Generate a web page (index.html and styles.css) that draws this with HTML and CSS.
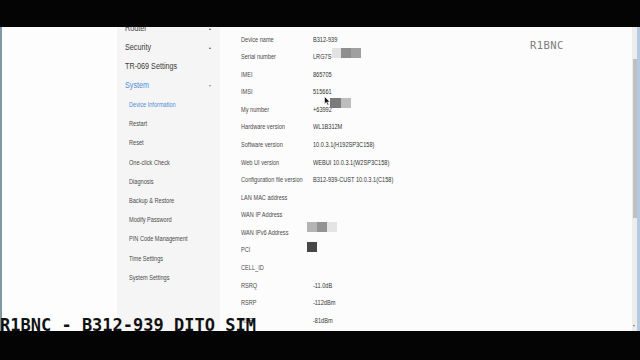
FILE: index.html
```html
<!DOCTYPE html>
<html lang="en">
<head>
<meta charset="utf-8">
<title>Device Information</title>
<link rel="stylesheet" href="styles.css">
</head>
<body>
<div class="screen">
  <div class="frame">
    <div class="blank"></div>
    <nav class="sidebar">
      <ul class="menu">
        <li class="item"><span class="txt">Router</span><i class="caret up"></i></li>
        <li class="item"><span class="txt">Security</span><i class="caret up"></i></li>
        <li class="item"><span class="txt">TR-069 Settings</span></li>
        <li class="item active"><span class="txt">System</span><i class="caret down"></i></li>
        <li class="sub active"><span class="txt">Device Information</span></li>
        <li class="sub"><span class="txt">Restart</span></li>
        <li class="sub"><span class="txt">Reset</span></li>
        <li class="sub"><span class="txt">One-click Check</span></li>
        <li class="sub"><span class="txt">Diagnosis</span></li>
        <li class="sub"><span class="txt">Backup &amp; Restore</span></li>
        <li class="sub"><span class="txt">Modify Password</span></li>
        <li class="sub"><span class="txt">PIN Code Management</span></li>
        <li class="sub"><span class="txt">Time Settings</span></li>
        <li class="sub"><span class="txt">System Settings</span></li>
      </ul>
    </nav>
    <main class="content">
      <div class="row"><span class="label">Device name</span><span class="value">B312-939</span></div>
      <div class="row"><span class="label">Serial number</span><span class="value">LRG7S</span></div>
      <div class="row"><span class="label">IMEI</span><span class="value">865705</span></div>
      <div class="row"><span class="label">IMSI</span><span class="value">515661</span></div>
      <div class="row"><span class="label">My number</span><span class="value">+63992</span></div>
      <div class="row"><span class="label">Hardware version</span><span class="value">WL1B312M</span></div>
      <div class="row"><span class="label">Software version</span><span class="value">10.0.3.1(H192SP3C158)</span></div>
      <div class="row"><span class="label">Web UI version</span><span class="value">WEBUI 10.0.3.1(W2SP3C158)</span></div>
      <div class="row"><span class="label">Configuration file version</span><span class="value">B312-939-CUST 10.0.3.1(C158)</span></div>
      <div class="row"><span class="label">LAN MAC address</span><span class="value"></span></div>
      <div class="row"><span class="label">WAN IP Address</span><span class="value"></span></div>
      <div class="row"><span class="label">WAN IPv6 Address</span><span class="value"></span></div>
      <div class="row"><span class="label">PCI</span><span class="value"></span></div>
      <div class="row"><span class="label">CELL_ID</span><span class="value"></span></div>
      <div class="row"><span class="label">RSRQ</span><span class="value">-11.0dB</span></div>
      <div class="row"><span class="label">RSRP</span><span class="value">-112dBm</span></div>
      <div class="row"><span class="label">RSSI</span><span class="value">-81dBm</span></div>
    </main>
    <div class="scrollbar"><div class="thumb"></div><i class="sb-arrow"></i></div>
  </div>

  <!-- censor pixel blocks over values -->
  <div class="px" style="left:332px;top:48px;width:9px;background:#e2e2e2"></div>
  <div class="px" style="left:341px;top:48px;width:10px;background:#8e8e8e"></div>
  <div class="px" style="left:351px;top:48px;width:10px;background:#a0a0a0"></div>
  <div class="px" style="left:330px;top:98px;width:11px;background:#7b7b7b"></div>
  <div class="px" style="left:341px;top:98px;width:10px;background:#bdbdbd"></div>
  <div class="px" style="left:307px;top:222px;width:10px;background:#b4b4b4"></div>
  <div class="px" style="left:317px;top:222px;width:10px;background:#939393"></div>
  <div class="px" style="left:327px;top:222px;width:10px;background:#e4e4e4"></div>
  <div class="px" style="left:307px;top:242px;width:10px;background:#474747"></div>

  <svg class="cursor" width="7" height="10" viewBox="0 0 7 10"><path d="M0.5 0.5 L0.5 8 L2.3 6.3 L3.6 9.3 L4.8 8.8 L3.6 5.9 L6 5.9 Z" fill="#111" stroke="#fff" stroke-width="0.6"/></svg>

  <div class="wm-top">R1BNC</div>
  <div class="wm-bottom">R1BNC - B312-939 DITO SIM</div>
</div>
</body>
</html>
```
FILE: styles.css
```css
html, body {
  margin: 0;
  padding: 0;
}
body {
  background: #040404;
  width: 640px;
  height: 360px;
  overflow: hidden;
  font-family: "Liberation Sans", Arial, sans-serif;
}
.screen {
  position: relative;
  width: 640px;
  height: 360px;
  box-sizing: border-box;
  padding-top: 27px;
}
.frame {
  height: 304px;
  width: 640px;
  box-sizing: border-box;
  display: flex;
  background: #fcfcfc;
  border-left: 2px solid #8197a8;
  border-right: 3px solid #b4cade;
  overflow: hidden;
}
.blank {
  width: 115px;
  flex: none;
  background: #fdfdfd;
}
.sidebar {
  width: 103px;
  flex: none;
  background: #f5f5f5;
}
.menu {
  list-style: none;
  margin: -9px 0 0;
  padding: 0;
}
.txt {
  display: inline-block;
  transform: scaleX(0.85);
  transform-origin: left center;
  white-space: nowrap;
}
.item {
  height: 19.25px;
  display: flex;
  align-items: center;
  justify-content: space-between;
  padding: 0 9px 0 8px;
  font-size: 8.5px;
  color: #3a3a3a;
}
.item.active {
  color: #4a8fd6;
}
.sub {
  height: 19.2px;
  display: flex;
  align-items: center;
  padding-left: 12px;
  font-size: 6.6px;
  color: #4a4a4a;
}
.sub.active {
  color: #4a8fd6;
}
.caret {
  width: 0;
  height: 0;
  border-left: 1.8px solid transparent;
  border-right: 1.8px solid transparent;
  margin-top: 2px;
}
.caret.up {
  border-bottom: 2.4px solid #555;
}
.caret.down {
  border-top: 2.4px solid #7a8ea3;
}
.content {
  flex: 1;
  padding: 3.4px 0 0 21px;
}
.row {
  height: 17.57px;
  display: flex;
  align-items: center;
}
.label, .value {
  display: inline-block;
  transform: scaleX(0.85);
  transform-origin: left center;
  white-space: nowrap;
  font-size: 6.6px;
}
.label {
  width: 72px;
  color: #4a4a4a;
}
.value {
  color: #333;
}
.scrollbar {
  width: 5px;
  flex: none;
  background: #ededed;
  position: relative;
}
.thumb {
  margin: 32px 0 0 1px;
  height: 159px;
  background: #c0c0c0;
}
.sb-arrow {
  position: absolute;
  left: 1px;
  bottom: 4px;
  width: 0;
  height: 0;
  border-left: 1.5px solid transparent;
  border-right: 1.5px solid transparent;
  border-top: 2px solid #777;
}
.px {
  position: absolute;
  height: 10px;
}
.cursor {
  position: absolute;
  left: 324px;
  top: 96px;
}
.wm-top {
  position: absolute;
  left: 530px;
  top: 40px;
  font-family: "DejaVu Sans Mono", monospace;
  font-size: 10.5px;
  line-height: 1;
  letter-spacing: 0.4px;
  color: #7c7c7c;
}
.wm-bottom {
  position: absolute;
  left: 0;
  top: 317px;
  font-family: "DejaVu Sans Mono", monospace;
  font-weight: bold;
  font-size: 17px;
  line-height: 17px;
  color: #111;
  white-space: pre;
}
```
